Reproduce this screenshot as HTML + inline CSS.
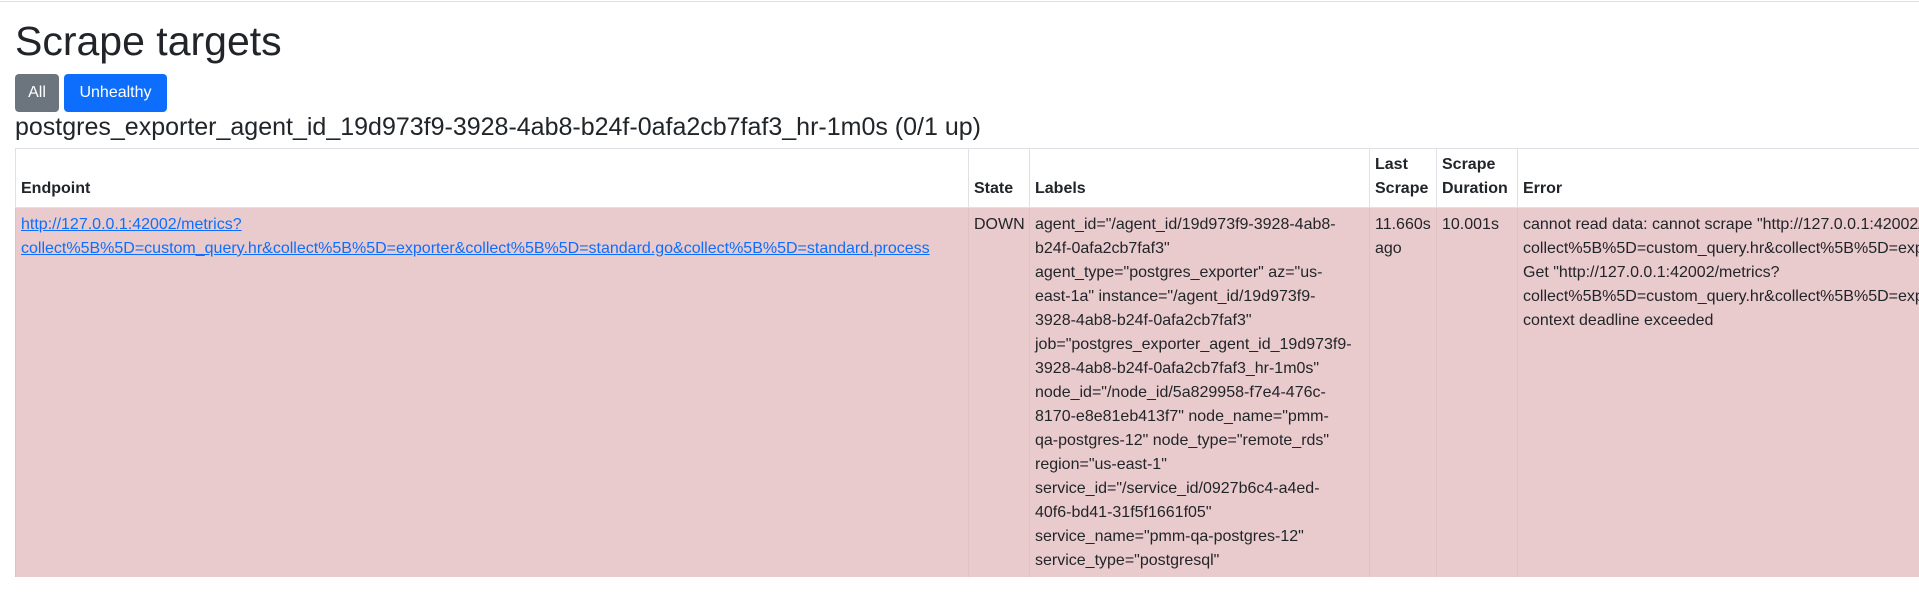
<!DOCTYPE html>
<html><head><meta charset="utf-8"><style>
html,body{margin:0;padding:0;background:#fff;overflow:hidden;width:1919px;height:612px}
body{font-family:"Liberation Sans",sans-serif;color:#212529;font-size:16px;position:relative}
.topline{position:absolute;left:0;top:1px;width:1919px;height:1px;background:#dee2e6}
h1{position:absolute;left:15px;top:17px;margin:0;font-weight:400;font-size:41px;line-height:48px}
.btn{position:absolute;top:74px;height:38px;line-height:38px;color:#fff;border-radius:4px;font-size:16px;text-align:center}
h2{position:absolute;left:15px;top:112px;margin:0;font-weight:400;font-size:25px;line-height:30px;white-space:nowrap}
table{position:absolute;left:15px;top:148px;border-collapse:collapse;table-layout:fixed;width:1904px}
td,th{padding:4px 5px;vertical-align:top;line-height:24px;white-space:nowrap;overflow:hidden;text-align:left;border-left:1px solid #dee2e6}
th{font-weight:700;vertical-align:bottom;border-top:1px solid #dee2e6;border-bottom:1px solid #dee2e6;padding-bottom:6px}
tbody td{background:#eacbcd;border-left:1px solid #e0c2c4;padding:5px 5px 4px}
a{color:#0d6efd;text-decoration:underline}
</style></head><body>
<div class="topline"></div>
<h1>Scrape targets</h1>
<div class="btn" style="left:15px;width:44px;background:#6c757d">All</div>
<div class="btn" style="left:64px;width:103px;background:#0d6efd">Unhealthy</div>
<h2>postgres_exporter_agent_id_19d973f9-3928-4ab8-b24f-0afa2cb7faf3_hr-1m0s (0/1 up)</h2>
<table>
<colgroup><col style="width:953px"><col style="width:61px"><col style="width:340px"><col style="width:67px"><col style="width:81px"><col style="width:402px"></colgroup>
<thead><tr><th>Endpoint</th><th>State</th><th>Labels</th><th>Last<br>Scrape</th><th>Scrape<br>Duration</th><th>Error</th></tr></thead>
<tbody><tr>
<td><a>http://127.0.0.1:42002/metrics?<br>collect%5B%5D=custom_query.hr&amp;collect%5B%5D=exporter&amp;collect%5B%5D=standard.go&amp;collect%5B%5D=standard.process</a></td>
<td>DOWN</td>
<td>agent_id="/agent_id/19d973f9-3928-4ab8-<br>b24f-0afa2cb7faf3"<br>agent_type="postgres_exporter" az="us-<br>east-1a" instance="/agent_id/19d973f9-<br>3928-4ab8-b24f-0afa2cb7faf3"<br>job="postgres_exporter_agent_id_19d973f9-<br>3928-4ab8-b24f-0afa2cb7faf3_hr-1m0s"<br>node_id="/node_id/5a829958-f7e4-476c-<br>8170-e8e81eb413f7" node_name="pmm-<br>qa-postgres-12" node_type="remote_rds"<br>region="us-east-1"<br>service_id="/service_id/0927b6c4-a4ed-<br>40f6-bd41-31f5f1661f05"<br>service_name="pmm-qa-postgres-12"<br>service_type="postgresql"</td>
<td>11.660s<br>ago</td>
<td>10.001s</td>
<td>cannot read data: cannot scrape "http://127.0.0.1:42002/metrics?<br>collect%5B%5D=custom_query.hr&amp;collect%5B%5D=exporter&amp;collect%5B%5D=standard.go<br>Get "http://127.0.0.1:42002/metrics?<br>collect%5B%5D=custom_query.hr&amp;collect%5B%5D=exporter&amp;collect%5B%5D=standard.go<br>context deadline exceeded</td>
</tr></tbody></table>
</body></html>
